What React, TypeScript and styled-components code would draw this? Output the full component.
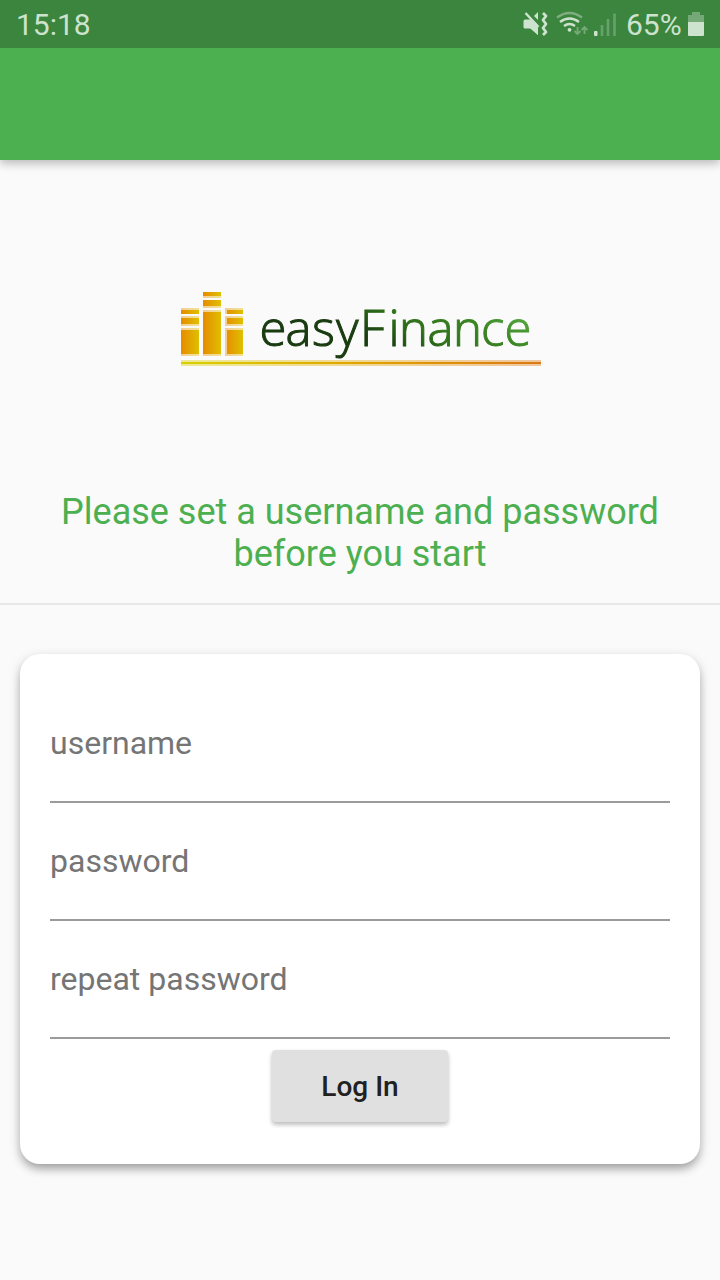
import React from "react";
import styled, { createGlobalStyle } from "styled-components";

const GlobalStyle = createGlobalStyle`
  * { box-sizing: border-box; }
  body { margin: 0; background: #fafafa; font-family: Roboto, "Liberation Sans", sans-serif; }
`;

const Screen = styled.div`
  height: 1280px;
  display: flex;
  flex-direction: column;
  background: #fafafa;
  overflow: hidden;
`;

const Header = styled.header`
  height: 160px;
  flex: none;
  background: #4caf50;
  box-shadow: 0 4px 8px rgba(0, 0, 0, 0.18), 0 1px 14px rgba(0, 0, 0, 0.1);
`;

const StatusBar = styled.div`
  height: 48px;
  padding: 0 15px 0 16px;
  display: flex;
  justify-content: space-between;
  align-items: center;
  background: #3b853e;
  color: #cde3ce;
  font-size: 30px;
  line-height: 48px;
`;

const Clock = styled.span`
  padding-top: 2px;
`;

const StatusIcons = styled.div`
  display: flex;
  align-items: center;
`;

const StatusGlyphs = styled.svg`
  display: block;
  width: 98px;
  height: 48px;
  margin-right: 8px;
`;

const Percent = styled.span`
  padding-top: 2px;
  width: 57px;
`;

const Battery = styled.svg`
  display: block;
  width: 17px;
  height: 48px;
  margin-left: 5px;
`;

const LogoArea = styled.div`
  height: 330px;
  flex: none;
  display: flex;
  justify-content: center;
  padding-top: 130px;
`;

const LogoSvg = styled.svg`
  display: block;
  width: 362px;
  height: 80px;
`;

const Title = styled.h1`
  height: 115px;
  margin: 0;
  padding-top: 1px;
  flex: none;
  border-bottom: 2px solid #e8e8e8;
  text-align: center;
  color: #4caf50;
  font-size: 36px;
  font-weight: 400;
  line-height: 42px;
`;

const Card = styled.form`
  height: 510px;
  flex: none;
  margin: 49px 20px 0;
  padding: 31px 30px 30px;
  display: flex;
  flex-direction: column;
  align-items: center;
  background: #fff;
  border-radius: 20px;
  box-shadow: 0 6px 10px -2px rgba(0, 0, 0, 0.24), 0 4px 12px rgba(0, 0, 0, 0.2);
`;

const Field = styled.label`
  width: 100%;
  height: 118px;
  flex: none;
  padding-top: 39px;
  border-bottom: 2px solid #9b9b9b;
  color: #757575;
  font-size: 32px;
  line-height: 38px;
`;

const Button = styled.button`
  width: 176px;
  height: 72px;
  margin: 11px 0 0;
  padding: 0;
  border: 0;
  border-radius: 4px;
  background: #e0e0e0;
  color: #212121;
  font: 500 28px Roboto, "Liberation Sans", sans-serif;
  box-shadow: 0 3px 4px rgba(0, 0, 0, 0.18), 0 2px 5px rgba(0, 0, 0, 0.1);
`;

function Indicators() {
  return (
    <StatusGlyphs viewBox="520 0 98 48">
      <g fill="#cde3ce">
        <path d="M525 19.500h5l8 7v8.500l-7.500-6.500h-5.500q-1.500 0-1.500-1.500v-6q0-1.500 1.500-1.500z" />
        <path d="M530 17l8 8v10l-8-7z" />
        <path d="M534 16l4-4v8z" />
        <path d="M525.500 13l13 14" stroke="#cde3ce" strokeWidth="2.400" />
        <path d="M543 13l3 3-3 4 3 4-3 4 3 4-3 3" fill="none" stroke="#cde3ce" strokeWidth="2.800" strokeLinejoin="round" />
      </g>
      <g fill="none" strokeWidth="2.400">
        <path d="M557 17.500q12.500-9 25 0" stroke="#7eae80" />
        <path d="M560 22q9.500-7 19 0M564 26q5.500-4 11 0" stroke="#cde3ce" />
      </g>
      <circle cx="569.500" cy="29.800" r="1.900" fill="#cde3ce" />
      <path d="M577.500 27v7M574.500 31l3 3 3-3M584.500 34v-7M581.500 30l3-3 3 3" fill="none" stroke="#76a978" strokeWidth="1.800" />
      <rect x="594" y="31" width="3.500" height="5" rx="1" fill="#cde3ce" />
      <path d="M602 25v11M608 19v17M614.500 13.500v22.500" stroke="#69a16c" strokeWidth="2.600" />
    </StatusGlyphs>
  );
}

const leftAndRightStrips = [[308, 2, 4, 0], [316, 2, 6, 2], [328, 2, 24, 2]];
const middleStrips = [[292, 0, 4, 2], [300, 0, 6, 2], [310, 2, 42, 2]];

function Column({ x, strips, softLeft }: { x: number; strips: number[][]; softLeft?: boolean }) {
  return (
    <>
      {strips.map(([y, top, solid, bottom]) => (
        <g key={y} fill={`url(#gold${x})`}>
          <rect x={x} y={y} width="18" height={top + solid + bottom} opacity="0.4" />
          <rect x={softLeft ? x + 2 : x} y={y + top} width={softLeft ? 16 : 18} height={solid} />
        </g>
      ))}
      <linearGradient id={`gold${x}`} gradientUnits="userSpaceOnUse" x1={x} x2={x + 18} y1="0" y2="0">
        <stop stopColor="#e68b00" />
        <stop offset="1" stopColor="#dfc000" />
      </linearGradient>
    </>
  );
}

function Logo() {
  return (
    <LogoSvg viewBox="179 290 362 80" role="img" aria-label="easyFinance">
      <defs>
        <linearGradient id="word" gradientUnits="userSpaceOnUse" x1="400" y1="355" x2="445" y2="275">
          <stop stopColor="#193b10" />
          <stop offset="0.350" stopColor="#2f701a" />
          <stop offset="0.700" stopColor="#3a8522" />
          <stop offset="1" stopColor="#50a43c" />
        </linearGradient>
        <linearGradient id="line" gradientUnits="userSpaceOnUse" x1="181" x2="541" y1="0" y2="0">
          <stop stopColor="#d9d000" />
          <stop offset="0.450" stopColor="#e0a800" />
          <stop offset="1" stopColor="#dc7812" />
        </linearGradient>
      </defs>
      <Column x={181} strips={leftAndRightStrips} />
      <Column x={203} strips={middleStrips} />
      <Column x={225} strips={leftAndRightStrips} softLeft />
      <rect x="181" y="360" width="360" height="6" fill="url(#line)" opacity="0.4" />
      <rect x="181" y="362" width="360" height="2" fill="url(#line)" />
      <text
        x="259.500 285.500 312 336 360 388.500 399 427.500 453 481 504.500"
        y="346"
        fill="url(#word)"
        stroke="url(#word)"
        strokeWidth="1"
        fontFamily="'Open Sans', 'Noto Sans', sans-serif"
        fontSize="49"
        fontWeight="300"
      >
        easyFinance
      </text>
    </LogoSvg>
  );
}

export default function App() {
  return (
    <Screen>
      <GlobalStyle />
      <Header>
        <StatusBar>
          <Clock>15:18</Clock>
          <StatusIcons>
            <Indicators />
            <Percent>65%</Percent>
            <Battery viewBox="688 0 17 48">
              <path d="M688 22v-7h4v-3h8v3h4v7z" fill="#76a978" />
              <path d="M688 22h16v13q0 1-1 1h-14q-1 0-1-1z" fill="#cde3ce" />
            </Battery>
          </StatusIcons>
        </StatusBar>
      </Header>
      <LogoArea>
        <Logo />
      </LogoArea>
      <Title>
        Please set a username and password
        <br />
        before you start
      </Title>
      <Card>
        <Field>username</Field>
        <Field>password</Field>
        <Field>repeat password</Field>
        <Button type="button">Log In</Button>
      </Card>
    </Screen>
  );
}
